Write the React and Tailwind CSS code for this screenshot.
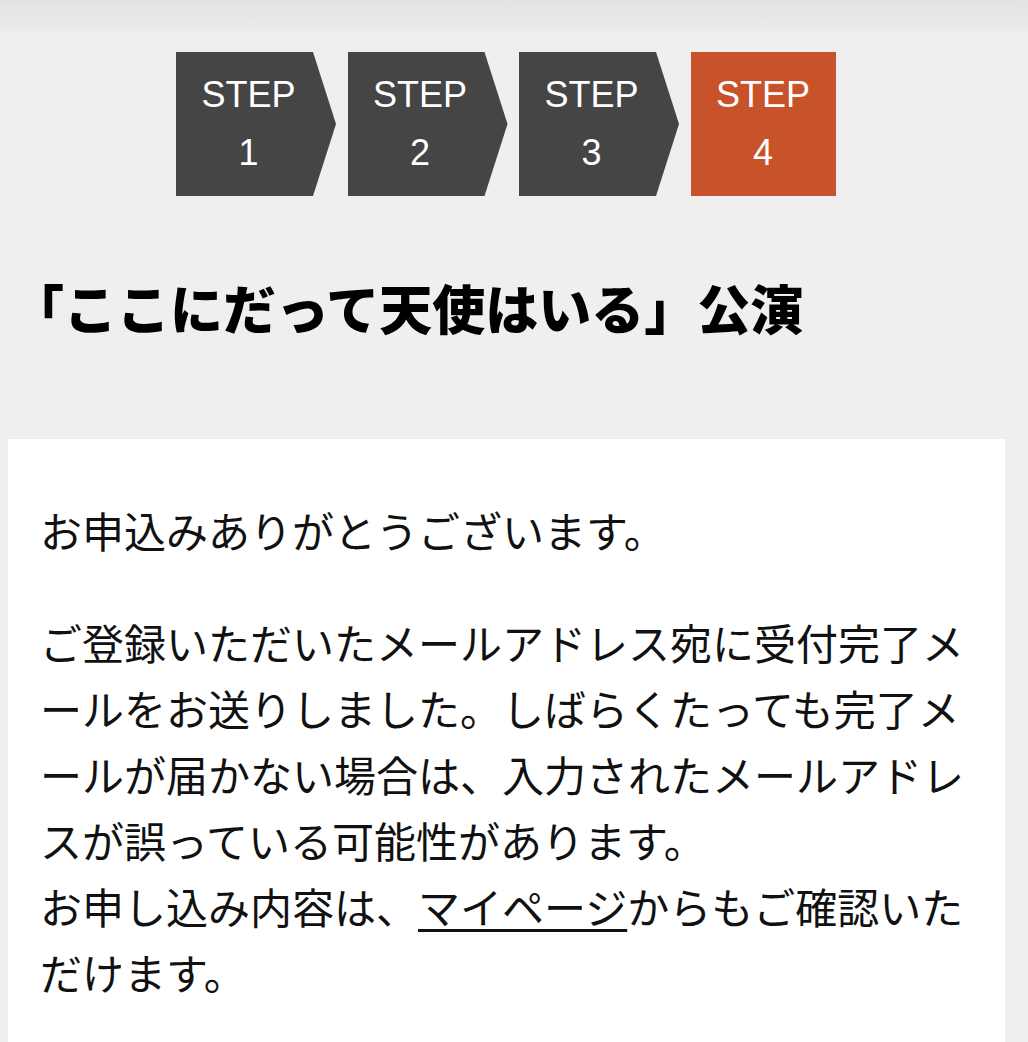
export default function App() {
  const steps = [1, 2, 3];
  return (
    <div className="min-h-[1042px] w-[1028px] bg-[#efefef] overflow-hidden">
      <div className="h-[40px] bg-gradient-to-b from-[#e2e2e2] to-[#efefef] -mb-[40px]" />
      <div className="relative flex pt-[52px] pl-[176px] gap-[11.5px] font-['Liberation_Sans',sans-serif] text-white text-[36px] leading-[58px]">
        {steps.map((n) => (
          <div
            key={n}
            className="w-[160px] h-[144px] bg-[#454545] pr-[15px] flex flex-col justify-center items-center [clip-path:polygon(0_0,137px_0,160px_50%,137px_100%,0_100%)]"
          >
            <span>STEP</span>
            <span>{n}</span>
          </div>
        ))}
        <div className="w-[145px] h-[144px] bg-[#c8532b] flex flex-col justify-center items-center">
          <span>STEP</span>
          <span>4</span>
        </div>
      </div>
      <h1 className="mt-[74px] pl-[11px] text-[53px] leading-[74px] font-black text-black font-['Noto_Sans_CJK_JP',sans-serif]">
        「ここにだって天使はいる」公演
      </h1>
      <div className="mt-[95px] ml-[8px] w-[997px] bg-white pt-[58px] pl-[32px] pr-[32px] pb-[40px] text-[42px] leading-[66px] text-[#111] font-['Noto_Sans_CJK_JP',sans-serif]">
        <p className="mb-[46px]">お申込みありがとうございます。</p>
        <p>
          ご登録いただいたメールアドレス宛に受付完了メールをお送りしました。しばらくたっても完了メールが届かない場合は、入力されたメールアドレスが誤っている可能性があります。
          <br />
          お申し込み内容は、<a className="underline underline-offset-[5px] decoration-[3px]">マイページ</a>からもご確認いただけます。
        </p>
      </div>
    </div>
  );
}
